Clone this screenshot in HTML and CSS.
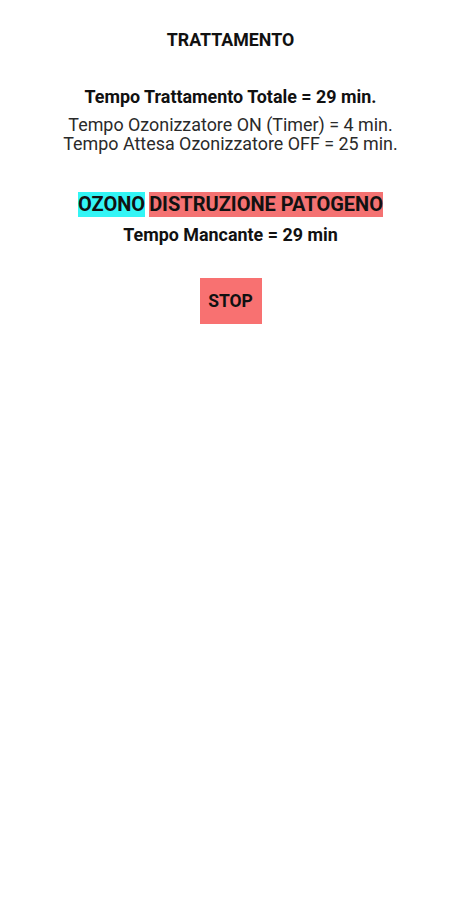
FILE: index.html
```html
<!DOCTYPE html>
<html>
<head>
<meta charset="utf-8">
<link rel="stylesheet" href="styles.css">
</head>
<body>
<main class="page">
  <h1 class="title">TRATTAMENTO</h1>
  <p class="total">Tempo Trattamento Totale = 29 min.</p>
  <p class="info">Tempo Ozonizzatore ON (Timer) = 4 min.<br>Tempo Attesa Ozonizzatore OFF = 25 min.</p>
  <div class="status"><span class="tag tag-ozono">OZONO</span><span class="tag tag-phase">DISTRUZIONE PATOGENO</span></div>
  <p class="remaining">Tempo Mancante = 29 min</p>
  <button class="stop">STOP</button>
</main>
</body>
</html>
```
FILE: styles.css
```css
html, body {
  margin: 0;
  padding: 0;
  background: #ffffff;
}
body {
  font-family: Roboto, "Noto Sans", sans-serif;
  color: #111111;
}
.page {
  display: flex;
  flex-direction: column;
  align-items: center;
  padding-top: 30px;
}
.title {
  margin: 0;
  font-size: 17.8px;
  font-weight: 700;
  line-height: 20px;
}
.total {
  margin: 37px 0 0;
  font-size: 17.9px;
  font-weight: 700;
  line-height: 20px;
}
.info {
  margin: 8px 0 0;
  font-size: 17.9px;
  font-weight: 400;
  line-height: 19px;
  text-align: center;
  color: #2a2a2a;
}
.status {
  display: flex;
  gap: 4px;
  margin-top: 39px;
  font-size: 20px;
  font-weight: 700;
  line-height: 25px;
  white-space: nowrap;
}
.tag {
  display: block;
}
.tag-ozono {
  background: #33f5f5;
}
.tag-phase {
  background: #f47272;
}
.remaining {
  margin: 8px 0 0;
  font-size: 17.9px;
  font-weight: 700;
  line-height: 20px;
}
.stop {
  margin-top: 33px;
  width: 62px;
  height: 46px;
  border: none;
  background: #f87171;
  font-family: Roboto, sans-serif;
  font-size: 17.5px;
  font-weight: 700;
  color: #111111;
  padding: 0;
}
```
